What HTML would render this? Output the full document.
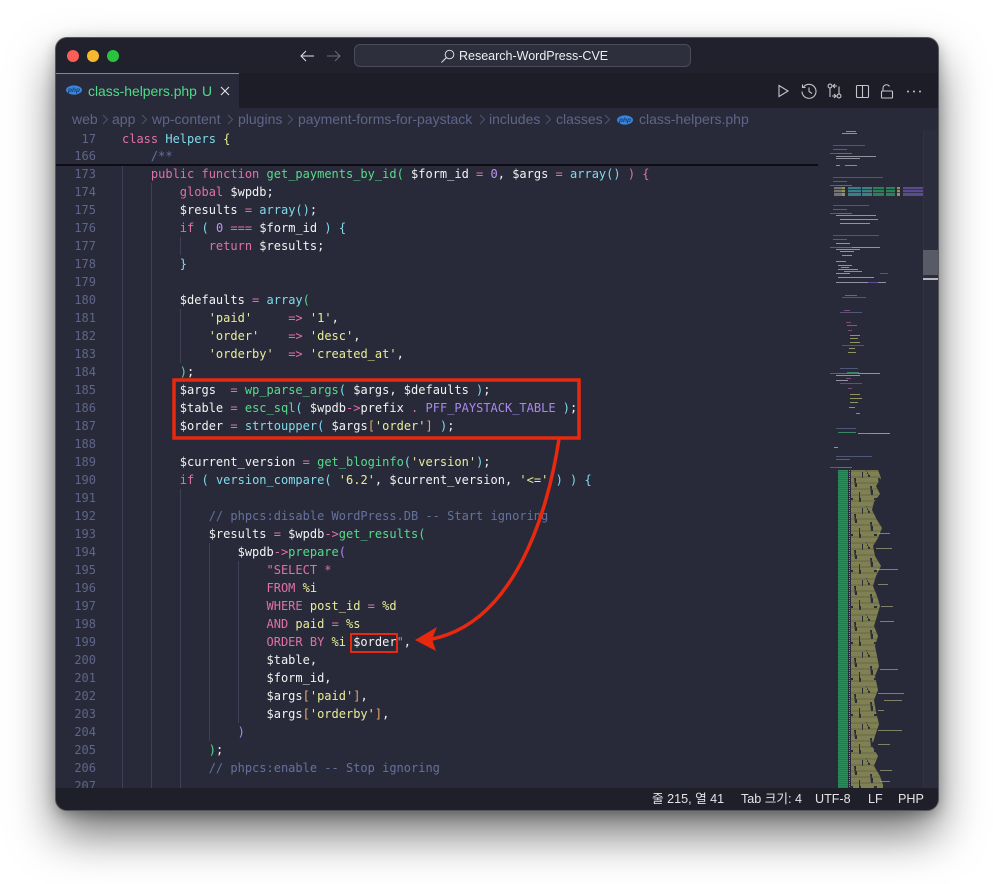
<!DOCTYPE html>
<html lang="ko">
<head>
<meta charset="utf-8">
<title>class-helpers.php</title>
<style>
html,body{margin:0;padding:0;background:#fff;width:993px;height:884px;overflow:hidden}
*{box-sizing:border-box}
#win{position:absolute;left:56px;top:38px;width:882px;height:772px;border-radius:11px;background:#292a39;box-shadow:0 0 0 1px #55565c,0 24px 46px rgba(0,0,0,.55),0 4px 14px rgba(0,0,0,.3);overflow:hidden}
.abs{position:absolute}
#title{left:0;top:0;width:882px;height:35px;background:#20212d}
#tabbar{left:0;top:35px;width:882px;height:35px;background:#1c1d27}
#tab{left:0;top:35px;width:183px;height:35px;background:#292a39;border-top:1px solid #c0669a}
#status{left:0;top:750px;width:882px;height:22px;background:#1e1f29}
.ui{font-family:"Liberation Sans","Noto Sans CJK KR",sans-serif}
.st{position:absolute;top:753px;font-size:12.6px;line-height:16px;color:#e4e4e8;white-space:pre}
.cr{position:absolute;top:71px;font-size:14px;line-height:20px;color:#5e6589;white-space:pre}
.mono{font-family:"DejaVu Sans Mono","Liberation Mono",monospace;font-size:12px;line-height:18px;white-space:pre}
#nums{left:0;top:127px;width:40px;text-align:right;color:#5e6589}
#code{left:66px;top:127px;color:#f2f2f2}
.s1{left:0;width:40px;text-align:right;color:#5e6589}
.g{position:absolute;width:1px;background:#3e4055}
b{font-weight:normal}
.k{color:#e071a8}.f{color:#55dd8b}.c{color:#7fdbea}.y{color:#e9ec97}.m{color:#65719f}.p{color:#bd93f9}.o{color:#e76fa8}.q{color:#e3a86c}.n{color:#a888ee}
</style>
</head>
<body>
<div id="win">
  <div class="abs" id="title"></div>
  <div class="abs" id="tabbar"></div>
  <div class="abs" id="tab"></div>

  <svg class="abs" style="left:0;top:0" width="300" height="35">
    <circle cx="17" cy="18" r="6" fill="#fa5f57"/>
    <circle cx="37" cy="18" r="6" fill="#f7b82e"/>
    <circle cx="57" cy="18" r="6" fill="#2ac33f"/>
    <path d="M258 18H245M250 13l-5 5 5 5" fill="none" stroke="#e4e4e8" stroke-width="1"/>
    <path d="M271 18h13M279 13l5 5-5 5" fill="none" stroke="#6a6b78" stroke-width="1"/>
  </svg>
  <div class="abs" style="left:298px;top:6px;width:337px;height:23px;background:#2e2f3d;border:1px solid #4b4c5a;border-radius:6px"></div>
  <svg class="abs" style="left:384px;top:10px" width="16" height="16"><circle cx="9.5" cy="6.5" r="4.3" fill="none" stroke="#d8d8dc" stroke-width="1"/><path d="M6.3 9.7 1.5 14.5" stroke="#d8d8dc" stroke-width="1.1"/></svg>
  <div class="abs ui" style="left:403px;top:10px;font-size:12.5px;line-height:16px;color:#eeeef0;white-space:pre">Research-WordPress-CVE</div>

  <svg class="abs" style="left:9px;top:46px" width="18" height="12"><ellipse cx="9" cy="6" rx="8" ry="4.6" fill="#3c85dd"/><text x="9" y="8" font-family="Liberation Sans,sans-serif" font-size="6.5" font-style="italic" font-weight="bold" text-anchor="middle" fill="#123a70">php</text></svg>
  <div class="abs ui" style="left:32px;top:45px;font-size:13.9px;line-height:16px;color:#4fdc88;white-space:pre">class-helpers.php</div>
  <div class="abs ui" style="left:146px;top:45px;font-size:13.9px;line-height:16px;color:#4fdc88">U</div>
  <svg class="abs" style="left:163px;top:47px" width="12" height="12"><path d="M2 2l8 8M10 2l-8 8" stroke="#e4e4e8" stroke-width="1.1"/></svg>

  <svg class="abs" style="left:712px;top:43px" width="160" height="20" fill="none" stroke="#c4c5cb" stroke-width="1.1">
    <path d="M11 4.5v11l9-5.500z"/>
    <path d="M35.500 6a7 7 0 1 1-1.500 4.500M34.500 3.500v3h3M41 6.500v4l3 2"/>
    <circle cx="62" cy="5" r="1.900"/><circle cx="71" cy="15" r="1.900"/><path d="M62 7v9M69 5h-4M67 3l-2 2 2 2M71 13V5.500M64 15h5M66 13l2 2-2 2"/>
    <rect x="88.500" y="4.500" width="12" height="12" rx="1"/><path d="M94.500 4.500v12"/>
    <rect x="113.500" y="10" width="11" height="7" rx=".8"/><path d="M115 10V7a3.500 3.500 0 0 1 6.500-1.500"/>
    <g fill="#c4c5cb" stroke="none"><circle cx="140" cy="10.500" r="1"/><circle cx="146" cy="10.500" r="1"/><circle cx="152" cy="10.500" r="1"/></g>
  </svg>

  <div class="cr ui" style="left:16px">web</div>
  <div class="cr ui" style="left:56px">app</div>
  <div class="cr ui" style="left:96px">wp-content</div>
  <div class="cr ui" style="left:182px">plugins</div>
  <div class="cr ui" style="left:242px">payment-forms-for-paystack</div>
  <div class="cr ui" style="left:433px">includes</div>
  <div class="cr ui" style="left:500px">classes</div>
  <div class="cr ui" style="left:583px">class-helpers.php</div>
  <svg class="abs" style="left:0;top:70px" width="560" height="24" fill="none" stroke="#4d5373" stroke-width="1">
    <path d="M47 7l4.500 4.500L47 16M86 7l4.500 4.500L86 16M172 7l4.500 4.500L172 16M232 7l4.500 4.500L232 16M424 7l4.500 4.500L424 16M490 7l4.500 4.500L490 16M549 7l4.500 4.500L549 16"/>
  </svg>
  <svg class="abs" style="left:560px;top:76px" width="18" height="12"><ellipse cx="9" cy="6" rx="8" ry="4.600" fill="#3c85dd"/><text x="9" y="8" font-family="Liberation Sans,sans-serif" font-size="6.500" font-style="italic" font-weight="bold" text-anchor="middle" fill="#123a70">php</text></svg>

  <!-- indent guides -->
  <div class="g" style="left:66px;top:127px;height:623px"></div>
  <div class="g" style="left:95px;top:145px;height:605px"></div>
  <div class="g" style="left:124px;top:199px;height:18px"></div>
  <div class="g" style="left:124px;top:271px;height:54px"></div>
  <div class="g" style="left:124px;top:451px;height:299px"></div>
  <div class="g" style="left:153px;top:505px;height:198px"></div>
  <div class="g" style="left:182px;top:523px;height:162px"></div>

  <div class="abs mono" id="nums">173
174
175
176
177
178
179
180
181
182
183
184
185
186
187
188
189
190
191
192
193
194
195
196
197
198
199
200
201
202
203
204
205
206
207</div>

  <div class="abs mono" id="code">    <b class="k">public function</b> <b class="f">get_payments_by_id</b><b class="f">(</b> $form_id <b class="o">=</b> <b class="p">0</b>, $args <b class="o">=</b> <b class="c">array</b><b class="c">()</b> <b class="k">) {</b>
        <b class="k">global</b> $wpdb;
        $results <b class="o">=</b> <b class="c">array</b><b class="c">()</b>;
        <b class="k">if</b> <b class="c">(</b> <b class="p">0</b> <b class="o">===</b> $form_id <b class="c">)</b> <b class="c">{</b>
            <b class="k">return</b> $results;
        <b class="c">}</b>

        $defaults <b class="o">=</b> <b class="c">array</b><b class="f">(</b>
            <b class="y">'paid'</b>     <b class="o">=&gt;</b> <b class="y">'1'</b>,
            <b class="y">'order'</b>    <b class="o">=&gt;</b> <b class="y">'desc'</b>,
            <b class="y">'orderby'</b>  <b class="o">=&gt;</b> <b class="y">'created_at'</b>,
        <b class="f">)</b>;
        $args  <b class="o">=</b> <b class="f">wp_parse_args</b><b class="c">(</b> $args, $defaults <b class="c">)</b>;
        $table <b class="o">=</b> <b class="f">esc_sql</b><b class="c">(</b> $wpdb<b class="o">-&gt;</b>prefix <b class="o">.</b> <b class="n">PFF_PAYSTACK_TABLE</b> <b class="c">)</b>;
        $order <b class="o">=</b> <b class="c">strtoupper</b><b class="c">(</b> $args<b class="q">[</b><b class="y">'order'</b><b class="q">]</b> <b class="c">)</b>;

        $current_version <b class="o">=</b> <b class="f">get_bloginfo</b><b class="c">(</b><b class="y">'version'</b><b class="c">)</b>;
        <b class="k">if</b> <b class="c">(</b> <b class="c">version_compare</b><b class="c">(</b> <b class="y">'6.2'</b>, $current_version, <b class="y">'&lt;='</b> <b class="c">) )</b> <b class="c">{</b>

            <b class="m">// phpcs:disable WordPress.DB -- Start ignoring</b>
            $results <b class="o">=</b> $wpdb<b class="o">-&gt;</b><b class="f">get_results</b><b class="f">(</b>
                $wpdb<b class="o">-&gt;</b><b class="f">prepare</b><b class="n">(</b>
                    <b class="k">"SELECT *</b>
                    <b class="k">FROM</b> <b class="y">%i</b>
                    <b class="k">WHERE</b> <b class="y">post_id</b> <b class="k">=</b> <b class="y">%d</b>
                    <b class="k">AND</b> <b class="y">paid</b> <b class="k">=</b> <b class="y">%s</b>
                    <b class="k">ORDER BY</b> <b class="y">%i</b> $order<b class="k">"</b>,
                    $table,
                    $form_id,
                    $args<b class="q">[</b><b class="y">'paid'</b><b class="q">]</b>,
                    $args<b class="q">[</b><b class="y">'orderby'</b><b class="q">]</b>,
                <b class="n">)</b>
            <b class="f">)</b>;
            <b class="m">// phpcs:enable -- Stop ignoring</b>
</div>

  <!-- sticky scroll -->
  <div class="abs" style="left:0;top:92px;width:762px;height:35px;background:#292a39"></div>
  <div class="abs mono s1" style="top:92px">17</div>
  <div class="abs mono s1" style="top:109px">166</div>
  <div class="abs mono" style="left:66px;top:92px;color:#f2f2f2"><b class="k">class</b> <b class="c">Helpers</b> <b class="y">{</b></div>
  <div class="abs mono" style="left:66px;top:109px"><b class="m">    /**</b></div>
  <div class="abs" style="left:0;top:126px;width:762px;height:2px;background:#0c0c12"></div>

  <!-- cover below editor then status -->
  <div class="abs" id="status"></div>
  <div class="st ui" style="left:596px">줄 215, 열 41</div>
  <div class="st ui" style="left:685px">Tab 크기: 4</div>
  <div class="st ui" style="left:759px">UTF-8</div>
  <div class="st ui" style="left:812px">LF</div>
  <div class="st ui" style="left:842px">PHP</div>

  <!-- scrollbar -->
  <div class="abs" style="left:867px;top:92px;width:15px;height:658px;background:#2c2d3c;border-left:1px solid #32333f"></div>
  <div class="abs" style="left:867px;top:212px;width:15px;height:25px;background:#585a66"></div>
  <div class="abs" style="left:867px;top:240px;width:15px;height:2px;background:#b8b9bf"></div>
</div>

<!-- minimap -->
<svg class="abs" style="left:0;top:0;pointer-events:none" width="993" height="884" fill="none">
  <defs>
    <pattern id="yy" width="24" height="36" patternUnits="userSpaceOnUse">
      <rect width="24" height="36" fill="#7f8152"/>
      <path d="M2 2h1v4h1v3h2v-2h-1zM14 10h2v5h1v4h-2zM6 18h2v4h1v5h-2zM19 24h1v6h1v4h-2zM10 30h3v2h-3zM22 4h1v6h-1z" fill="#2b2c3a"/>
      <path d="M0 3h24M0 9h24M0 15h24M0 21h24M0 27h24M0 33h24" stroke="#4e5044" stroke-width=".6"/>
    </pattern>
    <pattern id="gg" width="4" height="2" patternUnits="userSpaceOnUse">
      <rect width="4" height="2" fill="#2c8c5a"/>
      <path d="M0 1.500h4" stroke="#206b47" stroke-width=".6"/>
    </pattern>
  </defs>
  <g stroke-width="1" opacity=".6">
    <path stroke="#6a76a6" d="M833 145.500h32M833 177.500h50M833 205.500h36M833 235.500h46M842 297.500h24M842 345.500h22M840 312.500h22M840 368.500h18M840 383.500h22M836 428.500h20M836 456.500h36"/>
    <path stroke="#c060a0" d="M830 153.500h8M830 185.500h8M830 213.500h8M833 149.500h14M833 181.500h14M833 209.500h14M830 247.500h8M833 239.500h14M847 149.500h0M830 373.500h8M830 467.500h8M836 459.500h14M844 310.500h6M846 322.500h5M848 330.500h4M846 378.500h5M848 388.500h4"/>
    <path stroke="#44c67e" d="M838 153.500h14M838 185.500h14M838 213.500h14M838 247.500h24M838 373.500h20M838 467.500h14M845 295.500h12M847 325.500h10M847 372.500h12M838 432.500h18"/>
    <path stroke="#d9d9e0" d="M842 133.500h15M836 165.500h4M836 156.500h40M836 158.500h24M836 215.500h40M840 219.500h38M840 223.500h30M836 243.500h14M836 249.500h24M840 251.500h14M842 255.500h10M836 261.500h10M838 265.500h14M838 269.500h20M836 273.500h14M838 277.500h36M836 282.500h50M852 247.500h28M858 373.500h22M836 375.500h24M836 380.500h12M858 433.500h32M834 447.500h4"/>
    <path stroke="#d8da80" d="M846 131.500h10M845 165.500h12M841 267.500h8M844 271.500h18M850 335.500h10M850 338.500h8M850 342.500h10M849 348.500h6M848 352.500h8M850 394.500h10M850 398.500h12M850 402.500h8M849 407.500h6M856 413.500h4M860 433.500h10"/>
    <path stroke="#8a5fe0" d="M880 273.500h8M868 282.500h10"/>
  </g>
  <!-- wide block top -->
  <g opacity=".75">
    <rect x="834" y="187" width="8" height="9" fill="#8c8c88"/>
    <rect x="842" y="187" width="3" height="9" fill="#b7b860"/>
    <rect x="848" y="187" width="13" height="9" fill="#3f9aa6"/>
    <rect x="862" y="187" width="10" height="9" fill="#3fa09a"/>
    <rect x="873" y="187" width="11" height="9" fill="#2f9e64"/>
    <rect x="886" y="187" width="9" height="9" fill="#2f9e64"/>
    <rect x="897" y="187" width="3" height="9" fill="#b7b860"/>
    <rect x="903" y="187" width="20" height="9" fill="#6c58ac"/>
    <path d="M834 189.500h89M834 192.500h89" stroke="#292a39" stroke-width=".8"/>
  </g>
  <!-- big array block -->
  <rect x="838" y="470" width="10" height="318" fill="url(#gg)"/>
  <path d="M849.500 470v318" stroke="#8e8f80" stroke-dasharray="1 1"/>
  <polygon fill="url(#yy)" points="851,470 878,470 881,478 876,486 880,494 874,502 872,510 877,520 882,528 878,538 873,546 875,556 881,566 876,576 873,586 877,596 880,606 877,616 874,626 878,636 875,646 877,656 879,666 875,676 878,690 874,700 876,712 879,724 875,736 872,746 878,756 874,766 880,776 884,788 851,788"/>
  <path stroke="#a6a878" opacity=".7" d="M881 606.500h12M880 621.500h14M880 669.500h18M878 693.500h26M884 700.500h18M878 710.500h6M878 730.500h24M878 744.500h12M880 770.500h12M880 781.500h10M878 533.500h12M876 548.500h16M876 569.500h22M878 584.500h10"/>

  <!-- red annotations -->
  <rect x="174" y="380" width="405" height="58" stroke="#e8290f" stroke-width="3.500"/>
  <rect x="351" y="634" width="46" height="18" stroke="#e8290f" stroke-width="2"/>
  <path d="M559 439C548 512 515 622 432 639" stroke="#e8290f" stroke-width="3.500"/>
  <path d="M415 640 437 627 432 639 436 651Z" fill="#e8290f"/>
</svg>
</body>
</html>
